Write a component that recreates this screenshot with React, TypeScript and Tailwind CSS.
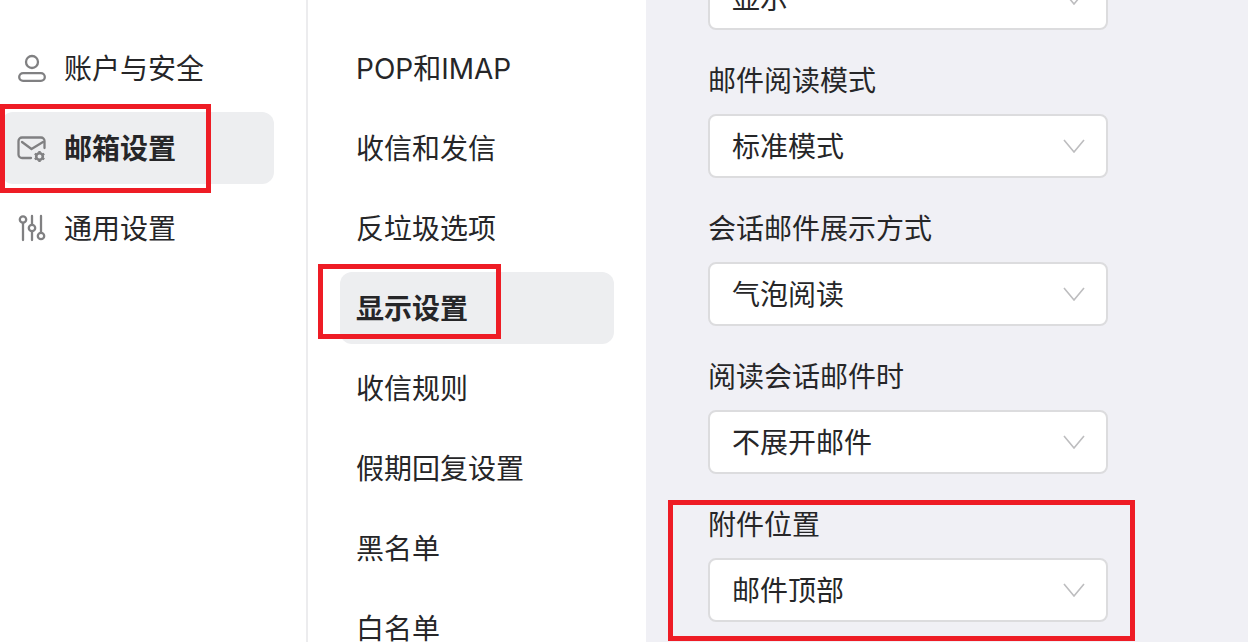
const font = { fontFamily: '"Inter", "Noto Sans CJK SC", sans-serif' };

function UserIcon() {
  return (
    <svg width="30" height="30" viewBox="0 0 30 30" fill="none" stroke="#808082" strokeWidth="2.3" className="shrink-0">
      <circle cx="15" cy="9" r="6" />
      <rect x="2.200" y="20.100" width="25.600" height="7.800" rx="3.900" />
    </svg>
  );
}

function MailGearIcon() {
  const teeth = [0, 60, 120, 180, 240, 300];
  return (
    <svg width="30" height="30" viewBox="0 0 30 30" fill="none" className="shrink-0">
      <path d="M14 25H5A3.500 3.500 0 0 1 1.500 21.500V8A3.500 3.500 0 0 1 5 4.500H24A3.500 3.500 0 0 1 27.500 8V15" stroke="#808082" strokeWidth="2.300" strokeLinecap="round" />
      <path d="M5 9l9.500 7L26 9" stroke="#808082" strokeWidth="2.300" strokeLinecap="round" strokeLinejoin="round" />
      <circle cx="22.500" cy="23.500" r="3.300" stroke="#808082" strokeWidth="2.600" />
      {teeth.map((a) => (
        <path key={a} d="M22.500 18v1.500" stroke="#808082" strokeWidth="2.400" transform={`rotate(${a} 22.500 23.500)`} />
      ))}
    </svg>
  );
}

function SlidersIcon() {
  return (
    <svg width="30" height="30" viewBox="0 0 30 30" fill="none" stroke="#808082" strokeWidth="2.300" strokeLinecap="round" className="shrink-0">
      <path d="M6 10V27M15 3V11.500M15 18.500V27M24 3V19.500" />
      <circle cx="6" cy="6.500" r="3.200" />
      <circle cx="15" cy="15" r="3.200" />
      <circle cx="24" cy="23" r="3.200" />
    </svg>
  );
}

function NavItem({ label, active, icon }: { label: string; active?: boolean; icon?: React.ReactNode }) {
  return (
    <div className={`flex h-[72px] shrink-0 items-center gap-[17px] rounded-xl pl-4 ${active ? "bg-[#edeef0] font-semibold" : ""}`}>
      {icon}
      <span className="whitespace-nowrap pt-[2px] text-[28px] leading-none text-[#262628]">{label}</span>
    </div>
  );
}

function Field({ label, value }: { label: string; value: string }) {
  return (
    <div className="flex flex-col">
      {label && <div className="flex h-[30px] items-center pt-[2px] text-[28px] leading-none text-[#262628]">{label}</div>}
      <div className={`flex h-16 w-[400px] items-center justify-between rounded-lg border-2 border-[#dcdcde] bg-white pl-[22px] pr-[21px] ${label ? "mt-[19px]" : ""}`}>
        <span className="pt-[2px] text-[28px] leading-none text-[#262628]">{value}</span>
        <svg width="22" height="14" viewBox="0 0 22 14" fill="none" stroke="#bdbdbf" strokeWidth="1.600">
          <path d="M1 1l10 12L21 1" />
        </svg>
      </div>
    </div>
  );
}

function RedBox({ className }: { className: string }) {
  return <div className={`pointer-events-none absolute border-[5px] border-[#ee1c25] ${className}`} />;
}

export default function App() {
  const mid = ["POP和IMAP", "收信和发信", "反垃圾选项", "显示设置", "收信规则", "假期回复设置", "黑名单", "白名单"];
  return (
    <div style={font} className="relative flex h-[642px] w-[1248px] overflow-hidden bg-white">
      <div className="flex w-[308px] shrink-0 flex-col gap-2 border-r-2 border-[#ececee] pl-[1px] pr-[32px] pt-8">
        <NavItem label="账户与安全" icon={<UserIcon />} />
        <NavItem label="邮箱设置" active icon={<MailGearIcon />} />
        <NavItem label="通用设置" icon={<SlidersIcon />} />
      </div>
      <div className="flex w-[338px] shrink-0 flex-col gap-2 pl-8 pr-8 pt-8">
        {mid.map((m) => (
          <NavItem key={m} label={m} active={m === "显示设置"} />
        ))}
      </div>
      <div className="flex flex-1 flex-col gap-[35px] bg-[#f0f0f5] pl-[62px] pt-0">
        <div className="-mt-[34px]">
          <Field label="" value="显示" />
        </div>
        <Field label="邮件阅读模式" value="标准模式" />
        <Field label="会话邮件展示方式" value="气泡阅读" />
        <Field label="阅读会话邮件时" value="不展开邮件" />
        <Field label="附件位置" value="邮件顶部" />
      </div>
      <RedBox className="left-0 top-[104px] h-[89px] w-[211px]" />
      <RedBox className="left-[318px] top-[264px] h-[75px] w-[183px]" />
      <RedBox className="left-[668px] top-[500px] h-[141px] w-[467px]" />
    </div>
  );
}
